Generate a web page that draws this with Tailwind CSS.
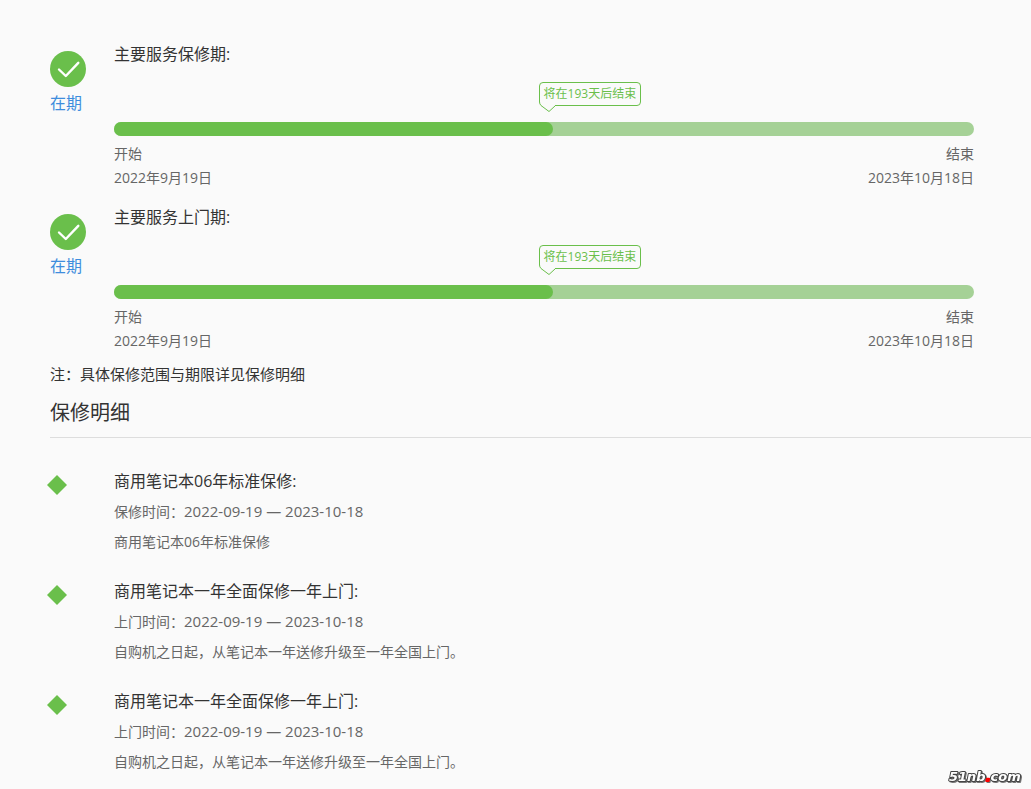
<!DOCTYPE html>
<html lang="zh-CN">
<head>
    <meta charset="UTF-8">
    <meta name="viewport" content="width=device-width, initial-scale=1.0">
    <title>保修信息</title>
    <script src="https://cdn.jsdelivr.net/npm/@tailwindcss/browser@4"></script>
    <style>
        body {
            font-family: 'Open Sans', 'Noto Sans CJK SC', sans-serif;
        }
    </style>
</head>
<body class="bg-[#fafafa] text-[#333]">
    <main class="pt-[42px]">
        <section class="flex pl-[50px] pr-[57px]">
            <div class="w-16 shrink-0 pt-[9px]">
                <svg class="w-9 h-9" viewBox="0 0 36 36" fill="none">
                    <circle cx="18" cy="18" r="18" fill="#6abf4b"/>
                    <path d="M9 18.5L15.8 25L28.3 11.8" stroke="#fff" stroke-width="2.4" stroke-linecap="round" stroke-linejoin="round"/>
                </svg>
                <p class="mt-1 text-base leading-6 text-[#3e8ddd]">在期</p>
            </div>
            <div class="flex-1">
                <h2 class="text-base leading-6">主要服务保修期:</h2>
                <div class="relative mt-14 h-3.5 rounded-full bg-[#a5d196]">
                    <div class="h-full rounded-full bg-[#6abf4b]" style="width: 51%"></div>
                    <div class="absolute bottom-[30px] left-[51%] -ml-3.5 h-6 px-1 border border-[#6abf4b] rounded bg-[#fafafa] text-xs leading-[22px] text-[#6abf4b] whitespace-nowrap">
                        将在193天后结束
                        <svg class="absolute -left-px top-[19px] w-[18px] h-[11px]" viewBox="0 0 18 11" fill="none">
                            <path d="M0 0V4H18V2H1V0Z" fill="#fafafa"/>
                            <path d="M.5 0Q.5 2 2 3.5L10 9.5L16.5 3.5" fill="#fafafa" stroke="#6abf4b"/>
                            <path d="M16 3.5H18" stroke="#6abf4b"/>
                        </svg>
                    </div>
                </div>
                <div class="mt-1.5 flex justify-between text-sm leading-6 text-[#666]">
                    <p>开始<br>2022年9月19日</p>
                    <p class="text-right">结束<br>2023年10月18日</p>
                </div>
            </div>
        </section>

        <section class="flex mt-[15px] pl-[50px] pr-[57px]">
            <div class="w-16 shrink-0 pt-[9px]">
                <svg class="w-9 h-9" viewBox="0 0 36 36" fill="none">
                    <circle cx="18" cy="18" r="18" fill="#6abf4b"/>
                    <path d="M9 18.5L15.8 25L28.3 11.8" stroke="#fff" stroke-width="2.4" stroke-linecap="round" stroke-linejoin="round"/>
                </svg>
                <p class="mt-1 text-base leading-6 text-[#3e8ddd]">在期</p>
            </div>
            <div class="flex-1">
                <h2 class="text-base leading-6">主要服务上门期:</h2>
                <div class="relative mt-14 h-3.5 rounded-full bg-[#a5d196]">
                    <div class="h-full rounded-full bg-[#6abf4b]" style="width: 51%"></div>
                    <div class="absolute bottom-[30px] left-[51%] -ml-3.5 h-6 px-1 border border-[#6abf4b] rounded bg-[#fafafa] text-xs leading-[22px] text-[#6abf4b] whitespace-nowrap">
                        将在193天后结束
                        <svg class="absolute -left-px top-[19px] w-[18px] h-[11px]" viewBox="0 0 18 11" fill="none">
                            <path d="M0 0V4H18V2H1V0Z" fill="#fafafa"/>
                            <path d="M.5 0Q.5 2 2 3.5L10 9.5L16.5 3.5" fill="#fafafa" stroke="#6abf4b"/>
                            <path d="M16 3.5H18" stroke="#6abf4b"/>
                        </svg>
                    </div>
                </div>
                <div class="mt-1.5 flex justify-between text-sm leading-6 text-[#666]">
                    <p>开始<br>2022年9月19日</p>
                    <p class="text-right">结束<br>2023年10月18日</p>
                </div>
            </div>
        </section>

        <div class="pl-[50px]">
            <p class="mt-[9px] text-[15px] leading-6">注：具体保修范围与期限详见保修明细</p>
            <h1 class="mt-[11px] pb-2 text-xl leading-8 border-b border-[#ddd]">保修明细</h1>
        </div>

        <ul class="mt-[27px] pl-[47px] flex flex-col gap-[18px]">
            <li class="flex">
                <div class="w-[67px] shrink-0 pt-2.5">
                    <svg class="w-5 h-5" viewBox="0 0 20 20"><path d="M10 0L20 10L10 20L0 10Z" fill="#6abf4b"/></svg>
                </div>
                <div class="text-sm leading-[30px] text-[#666]">
                    <h3 class="text-base leading-8 text-[#333]">商用笔记本06年标准保修:</h3>
                    <p>保修时间：<span class="text-[15px] leading-4">2022-09-19 — 2023-10-18</span></p>
                    <p>商用笔记本06年标准保修</p>
                </div>
            </li>
            <li class="flex">
                <div class="w-[67px] shrink-0 pt-2.5">
                    <svg class="w-5 h-5" viewBox="0 0 20 20"><path d="M10 0L20 10L10 20L0 10Z" fill="#6abf4b"/></svg>
                </div>
                <div class="text-sm leading-[30px] text-[#666]">
                    <h3 class="text-base leading-8 text-[#333]">商用笔记本一年全面保修一年上门:</h3>
                    <p>上门时间：<span class="text-[15px] leading-4">2022-09-19 — 2023-10-18</span></p>
                    <p>自购机之日起，从笔记本一年送修升级至一年全国上门。</p>
                </div>
            </li>
            <li class="flex">
                <div class="w-[67px] shrink-0 pt-2.5">
                    <svg class="w-5 h-5" viewBox="0 0 20 20"><path d="M10 0L20 10L10 20L0 10Z" fill="#6abf4b"/></svg>
                </div>
                <div class="text-sm leading-[30px] text-[#666]">
                    <h3 class="text-base leading-8 text-[#333]">商用笔记本一年全面保修一年上门:</h3>
                    <p>上门时间：<span class="text-[15px] leading-4">2022-09-19 — 2023-10-18</span></p>
                    <p>自购机之日起，从笔记本一年送修升级至一年全国上门。</p>
                </div>
            </li>
        </ul>
    </main>

    <!-- watermark -->
    <svg class="fixed right-1 bottom-0.5 w-20 h-[18px] drop-shadow-[1px_1px_0_#777]" viewBox="0 0 80 18">
        <text x="2" y="12" font-family="DejaVu Sans, sans-serif" font-size="13" font-weight="bold" font-style="italic" stroke-linejoin="round" fill="#fff" stroke="#444" stroke-width="2" paint-order="stroke">51nb<tspan fill="#f00" stroke="#f00">.</tspan>com</text>
    </svg>
</body>
</html>
